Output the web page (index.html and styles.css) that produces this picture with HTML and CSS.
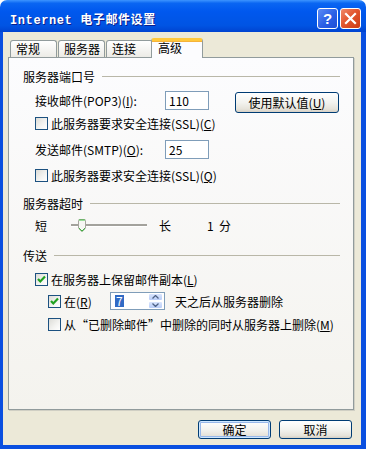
FILE: index.html
```html
<!DOCTYPE html>
<html lang="zh-CN">
<head>
  <meta charset="UTF-8">
  <meta name="viewport" content="width=device-width, initial-scale=1.0">
  <title>Internet 电子邮件设置</title>
  <link rel="stylesheet" href="styles.css">
</head>
<body>
  <div class="window">
    <div class="titlebar">
      <span class="title">Internet 电子邮件设置</span>
      <span class="tb-btn help">?</span>
      <span class="tb-btn close">
        <svg width="13" height="13" viewBox="0 0 13 13"><path d="M2 2 L11 11 M11 2 L2 11" stroke="#fff" stroke-width="2.2" stroke-linecap="square"/></svg>
      </span>
    </div>

    <div class="frame">
      <div class="dialog">
        <!-- Tabs -->
        <div class="tabs">
          <div class="tab">常规</div>
          <div class="tab">服务器</div>
          <div class="tab">连接</div>
          <div class="tab active">高级</div>
        </div>

        <div class="panel">
          <!-- Server ports -->
          <div class="group-head head-ports"><span>服务器端口号</span><span class="rule"></span></div>
          <div class="field-row row-pop3">
            <span class="field-label">接收邮件(POP3)(<u>I</u>):</span>
            <span class="textbox">110</span>
            <button class="btn btn-wide">使用默认值(<u>U</u>)</button>
          </div>
          <div class="check row-ssl1">
            <span class="box"></span>
            <span>此服务器要求安全连接(SSL)(<u>C</u>)</span>
          </div>
          <div class="field-row row-smtp">
            <span class="field-label">发送邮件(SMTP)(<u>O</u>):</span>
            <span class="textbox">25</span>
          </div>
          <div class="check row-ssl2">
            <span class="box"></span>
            <span>此服务器要求安全连接(SSL)(<u>Q</u>)</span>
          </div>

          <!-- Timeout -->
          <div class="group-head head-timeout"><span>服务器超时</span><span class="rule"></span></div>
          <div class="slider-row">
            <span class="slider-short">短</span>
            <span class="track">
              <svg class="thumb" width="8" height="13" viewBox="0 0 8 13">
                <path d="M1.5 0.5 H6.5 Q7.5 0.5 7.5 1.5 V9 L4 12.5 L0.5 9 V1.5 Q0.5 0.5 1.5 0.5 Z" fill="#f7f7f4" stroke="#a6a69e"/>
                <path d="M1 1 H7" stroke="#3ec13e"/>
                <path d="M1 9.3 L4 12.2 L7 9.3" fill="none" stroke="#21a121"/>
              </svg>
            </span>
            <span class="slider-long">长</span>
            <span class="slider-value">1</span>
            <span class="slider-unit">分</span>
          </div>

          <!-- Delivery -->
          <div class="group-head head-delivery"><span>传送</span><span class="rule"></span></div>
          <div class="check checked row-keep">
            <span class="box"><svg width="11" height="11" viewBox="0 0 11 11"><path d="M2 5 L4.3 7.5 L9 2.5" fill="none" stroke="#21a121" stroke-width="2.2"/></svg></span>
            <span>在服务器上保留邮件副本(<u>L</u>)</span>
          </div>
          <div class="spin-row">
            <div class="check checked check-days">
              <span class="box"><svg width="11" height="11" viewBox="0 0 11 11"><path d="M2 5 L4.3 7.5 L9 2.5" fill="none" stroke="#21a121" stroke-width="2.2"/></svg></span>
              <span>在(<u>R</u>)</span>
            </div>
            <span class="spinbox">
              <span class="spin-text"><span class="selected">7</span></span>
              <span class="spin-buttons">
                <span class="spin-btn"><svg width="7" height="4" viewBox="0 0 7 4"><path d="M0.5 3.5 L3.5 0.5 L6.5 3.5" fill="none" stroke="#4d6185" stroke-width="1.3"/></svg></span>
                <span class="spin-btn"><svg width="7" height="4" viewBox="0 0 7 4"><path d="M0.5 0.5 L3.5 3.5 L6.5 0.5" fill="none" stroke="#4d6185" stroke-width="1.3"/></svg></span>
              </span>
            </span>
            <span class="spin-after">天之后从服务器删除</span>
          </div>
          <div class="check row-deleted">
            <span class="box"></span>
            <span>从“已删除邮件”中删除的同时从服务器上删除(<u>M</u>)</span>
          </div>
        </div>

        <div class="actions">
          <button class="btn btn-default">确定</button>
          <button class="btn">取消</button>
        </div>
      </div>
    </div>
  </div>
</body>
</html>
```

FILE: styles.css
```css
body {
  margin: 0;
  background: #fff;
  font-family: "Noto Sans CJK SC", "Noto Sans", sans-serif;
  font-size: 12px;
  color: #000;
}
.window {
  width: 366px;
  height: 449px;
  display: flex;
  flex-direction: column;
}
.titlebar {
  height: 32px;
  box-sizing: border-box;
  padding: 5px 5px 0 10px;
  display: flex;
  align-items: center;
  border-radius: 7px 7px 0 0;
  background: linear-gradient(to bottom, #3d95ff 0%, #0a66f2 10%, #0058ee 35%, #0054e3 80%, #0043d0 100%);
}
.title {
  flex: 1;
  color: #fff;
  font-family: "Liberation Mono", "Noto Sans CJK SC", monospace;
  font-weight: bold;
  font-size: 12px;
  letter-spacing: 0.6px;
  text-shadow: 1px 1px 0 #0a1e8c;
}
.tb-btn {
  width: 21px;
  height: 21px;
  box-sizing: border-box;
  border: 1px solid #fff;
  border-radius: 3px;
  display: flex;
  align-items: center;
  justify-content: center;
}
.help {
  margin-right: 2px;
  background: linear-gradient(135deg, #5b8cf5 0%, #2a5fe6 55%, #1d4fd6 100%);
  color: #fff;
  font-family: "Liberation Sans", sans-serif;
  font-weight: bold;
  font-size: 15px;
  line-height: 19px;
}
.close {
  background: linear-gradient(135deg, #f08a6a 0%, #e2562f 45%, #cc3a14 100%);
}
.frame {
  flex: 1;
  display: flex;
  background: #0a4fe0;
  padding: 0 5px 4px 3px;
}
.dialog {
  flex: 1;
  background: #ece9d8;
  padding: 6px 7px 0 5px;
}

/* Tabs */
.tabs {
  display: flex;
  align-items: flex-end;
  padding-left: 2px;
  position: relative;
  z-index: 1;
}
.tab {
  width: 47px;
  height: 17px;
  box-sizing: border-box;
  margin-right: 1px;
  padding-left: 5px;
  border: 1px solid #919b9c;
  border-bottom: none;
  border-radius: 3px 3px 0 0;
  background: linear-gradient(to bottom, #fff, #ecebe6);
  line-height: 16px;
}
.tab.active {
  width: 52px;
  height: 20px;
  margin-left: -3px;
  margin-bottom: -1px;
  padding-left: 6px;
  border-top: 3px solid #ffc83c;
  background: #fcfcfe;
  line-height: 13px;
  box-shadow: inset 0 1px 0 #f5b33a;
}

/* Panel */
.panel {
  height: 353px;
  box-sizing: border-box;
  border: 1px solid #919b9c;
  box-shadow: 1px 1px 0 #d0cfc4;
  background: linear-gradient(to bottom, #fcfcfe, #f4f3ee);
  padding: 0 13px 0 14px;
}
.group-head {
  display: flex;
  align-items: center;
  height: 13px;
  line-height: 13px;
}
.rule {
  flex: 1;
  height: 1px;
  margin-left: 7px;
  background: #b9b7a8;
}
.head-ports { margin-top: 12px; }
.head-timeout { margin-top: 15px; }
.head-delivery { margin-top: 17px; }

.field-row {
  display: flex;
  align-items: flex-start;
  margin-left: 12px;
}
.field-label {
  width: 130px;
  line-height: 20px;
}
.row-pop3 { margin-top: 8px; height: 22px; }
.row-smtp { margin-top: 10px; height: 19px; }
.textbox {
  width: 44px;
  height: 19px;
  box-sizing: border-box;
  border: 1px solid #7f9db9;
  background: #fff;
  padding-left: 3px;
  line-height: 17px;
}
.btn {
  font-family: inherit;
  font-size: 12px;
  color: #000;
  width: 73px;
  height: 19px;
  padding: 0;
  border: 1px solid #003c74;
  border-radius: 3px;
  background: linear-gradient(to bottom, #fff 0%, #f3f3ef 50%, #e6e3da 85%, #d6d0c5 100%);
  line-height: 16px;
}
.btn-wide {
  width: 104px;
  height: 21px;
  margin: 1px 0 0 26px;
}
.btn-default {
  box-shadow: inset 0 0 0 1px #cee7ff, inset 0 0 0 2px #98b8ea;
}

.check {
  display: flex;
  align-items: center;
  height: 13px;
  margin-left: 12px;
  line-height: 13px;
}
.box {
  width: 13px;
  height: 13px;
  box-sizing: border-box;
  margin-right: 3px;
  border: 1px solid #1c5180;
  background: linear-gradient(135deg, #dcdcd7 0%, #f4f4f2 60%, #fff 100%);
  display: flex;
  align-items: center;
  justify-content: center;
  flex-shrink: 0;
}
.row-ssl1 { margin-top: 4px; }
.row-ssl2 { margin-top: 10px; }
.row-keep { margin-top: 11px; }
.row-deleted { margin-top: 8px; margin-left: 25px; }

/* Slider */
.slider-row {
  display: flex;
  align-items: center;
  height: 14px;
  margin: 8px 0 0 12px;
}
.slider-short { width: 12px; margin-right: 24px; }
.track {
  position: relative;
  width: 76px;
  height: 3px;
  box-sizing: border-box;
  border-top: 2px solid #a3a29c;
  border-bottom: 1px solid #fff;
}
.thumb {
  position: absolute;
  left: 7px;
  top: -7px;
}
.slider-long { margin-left: 12px; width: 12px; }
.slider-value { margin-left: 36px; width: 12px; }

/* Spin row */
.spin-row {
  display: flex;
  align-items: center;
  height: 18px;
  margin: 6px 0 0 25px;
}
.check-days {
  margin-left: 0;
  width: 62px;
}
.spinbox {
  display: flex;
  width: 55px;
  height: 18px;
  box-sizing: border-box;
  border: 1px solid #7f9db9;
  background: #fff;
}
.spin-text {
  flex: 1;
  padding: 2px 0 0 4px;
  line-height: 12px;
}
.selected {
  display: inline-block;
  background: #316ac5;
  color: #fff;
  padding: 0 1px;
}
.spin-buttons {
  display: flex;
  flex-direction: column;
  width: 15px;
  margin: 0 1px 0 0;
}
.spin-btn {
  flex: 1;
  display: flex;
  align-items: center;
  justify-content: center;
  background: linear-gradient(to bottom, #d9e5fd, #b9cdf8);
  border: 1px solid #fff;
  border-radius: 2px;
}
.spin-after { margin-left: 10px; }

/* Dialog buttons */
.actions {
  display: flex;
  justify-content: flex-end;
  gap: 8px;
  margin: 10px 2px 0 0;
}
```
